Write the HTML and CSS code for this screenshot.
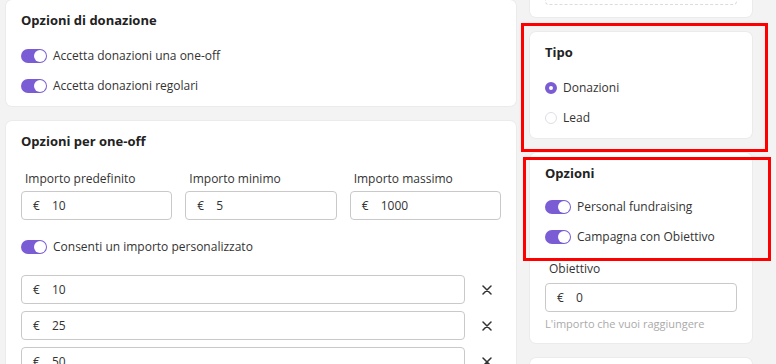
FILE: index.html
```html
<!DOCTYPE html>
<html lang="it">
<head>
<meta charset="utf-8">
<title>Opzioni</title>
<link rel="stylesheet" href="styles.css">
</head>
<body>
<div class="page">
  <div class="col col-left">
    <section class="card">
      <h3 class="card-title">Opzioni di donazione</h3>
      <div class="options">
        <label class="toggle-row"><span class="toggle"></span>Accetta donazioni una one-off</label>
        <label class="toggle-row"><span class="toggle"></span>Accetta donazioni regolari</label>
      </div>
    </section>
    <section class="card card-tall">
      <h3 class="card-title">Opzioni per one-off</h3>
      <div class="amount-grid">
        <div class="field">
          <div class="field-label">Importo predefinito</div>
          <div class="input"><span class="cur">€</span>10</div>
        </div>
        <div class="field">
          <div class="field-label">Importo minimo</div>
          <div class="input"><span class="cur">€</span>5</div>
        </div>
        <div class="field">
          <div class="field-label">Importo massimo</div>
          <div class="input"><span class="cur">€</span>1000</div>
        </div>
      </div>
      <label class="toggle-row custom"><span class="toggle"></span>Consenti un importo personalizzato</label>
      <div class="preset-list">
        <div class="preset-row">
          <div class="input"><span class="cur">€</span>10</div>
          <svg class="remove" viewBox="0 0 10 10" width="10" height="10"><path d="M1 1L9 9M9 1L1 9" stroke="#333" stroke-width="1.5" stroke-linecap="round"/></svg>
        </div>
        <div class="preset-row">
          <div class="input"><span class="cur">€</span>25</div>
          <svg class="remove" viewBox="0 0 10 10" width="10" height="10"><path d="M1 1L9 9M9 1L1 9" stroke="#333" stroke-width="1.5" stroke-linecap="round"/></svg>
        </div>
        <div class="preset-row">
          <div class="input"><span class="cur">€</span>50</div>
          <svg class="remove" viewBox="0 0 10 10" width="10" height="10"><path d="M1 1L9 9M9 1L1 9" stroke="#333" stroke-width="1.5" stroke-linecap="round"/></svg>
        </div>
      </div>
    </section>
  </div>
  <div class="col col-right">
    <section class="card card-top">
      <div class="dashed"></div>
    </section>
    <section class="card">
      <h3 class="card-title">Tipo</h3>
      <div class="options">
        <label class="radio-row"><span class="radio checked"></span>Donazioni</label>
        <label class="radio-row"><span class="radio"></span>Lead</label>
      </div>
    </section>
    <section class="card card-goal">
      <h3 class="card-title">Opzioni</h3>
      <div class="options">
        <label class="toggle-row"><span class="toggle"></span>Personal fundraising</label>
        <label class="toggle-row"><span class="toggle"></span>Campagna con Obiettivo</label>
      </div>
      <div class="goal">
        <div class="field-label">Obiettivo</div>
        <div class="input"><span class="cur">€</span>0</div>
        <div class="help">L'importo che vuoi raggiungere</div>
      </div>
    </section>
    <section class="card card-next"></section>
  </div>
  <div class="mark mark-1"></div>
  <div class="mark mark-2"></div>
</div>
</body>
</html>
```

FILE: styles.css
```css
* { box-sizing: border-box; }
html, body { margin: 0; padding: 0; }
body {
  background: #f3f3f3;
  font-family: "Open Sans", "Noto Sans", sans-serif;
  font-size: 12px;
  color: #333;
  overflow: hidden;
  height: 364px;
}
.page {
  position: relative;
  display: grid;
  grid-template-columns: 510px 222px;
  column-gap: 14px;
  padding-left: 6px;
  align-items: start;
}
.col { display: flex; flex-direction: column; gap: 15px; }
.col-right { margin-top: -43px; }
.card {
  background: #fff;
  border-radius: 6px;
  padding: 11px 15px 13px;
  box-shadow: 0 0 0 1px rgba(0,0,0,0.03);
}
.card-title {
  margin: 0;
  font-size: 13px;
  line-height: 18px;
  font-weight: 700;
  color: #222;
}
.options { display: flex; flex-direction: column; gap: 16px; margin-top: 20px; }
.toggle-row, .radio-row {
  display: flex;
  align-items: center;
  height: 14px;
  line-height: 14px;
  gap: 6px;
  color: #333;
  white-space: nowrap;
}
.toggle {
  position: relative;
  flex: none;
  width: 26px;
  height: 14px;
  border-radius: 7px;
  background: #7a5cd4;
}
.toggle::after {
  content: "";
  position: absolute;
  right: 1px;
  top: 1px;
  width: 12px;
  height: 12px;
  border-radius: 50%;
  background: #fff;
}
.radio {
  flex: none;
  width: 12px;
  height: 12px;
  border-radius: 50%;
  border: 1px solid #dcdfe6;
  background: #fff;
}
.radio.checked { border: 4px solid #7a5cd4; }

.card-tall { min-height: 300px; }
.amount-grid {
  display: grid;
  grid-template-columns: repeat(3, 1fr);
  column-gap: 13px;
  margin-top: 21px;
}
.field-label {
  padding-left: 4px;
  line-height: 16px;
  margin-bottom: 4px;
  color: #333;
}
.input {
  height: 29px;
  border: 1px solid #c9c9c9;
  border-radius: 4px;
  background: #fff;
  display: flex;
  align-items: center;
  padding-left: 11px;
  color: #333;
}
.cur { width: 19px; flex: none; }
.custom { margin-top: 20px; }
.preset-list {
  display: flex;
  flex-direction: column;
  gap: 7px;
  margin-top: 21px;
}
.preset-row {
  display: grid;
  grid-template-columns: 1fr 10px;
  column-gap: 17px;
  align-items: center;
  padding-right: 9px;
}
.remove { display: block; }

.card-top { padding: 0 15px 12px; }
.dashed {
  height: 48px;
  border: 1px dashed #dcdcdc;
  border-radius: 4px;
}
.card-goal { padding-bottom: 12px; }
.card-goal .options { margin-top: 18px; }
.goal { margin-top: 17px; }
.goal .field-label { margin-bottom: 6px; }
.help {
  margin-top: 5px;
  font-size: 11px;
  line-height: 14px;
  color: #aaa;
}
.card-next { height: 40px; }

.mark {
  position: absolute;
  border: 3px solid #ff0000;
  pointer-events: none;
}
.mark-1 { left: 521px; top: 23px; width: 247px; height: 129px; }
.mark-2 { left: 523px; top: 157px; width: 248px; height: 104px; }
```
